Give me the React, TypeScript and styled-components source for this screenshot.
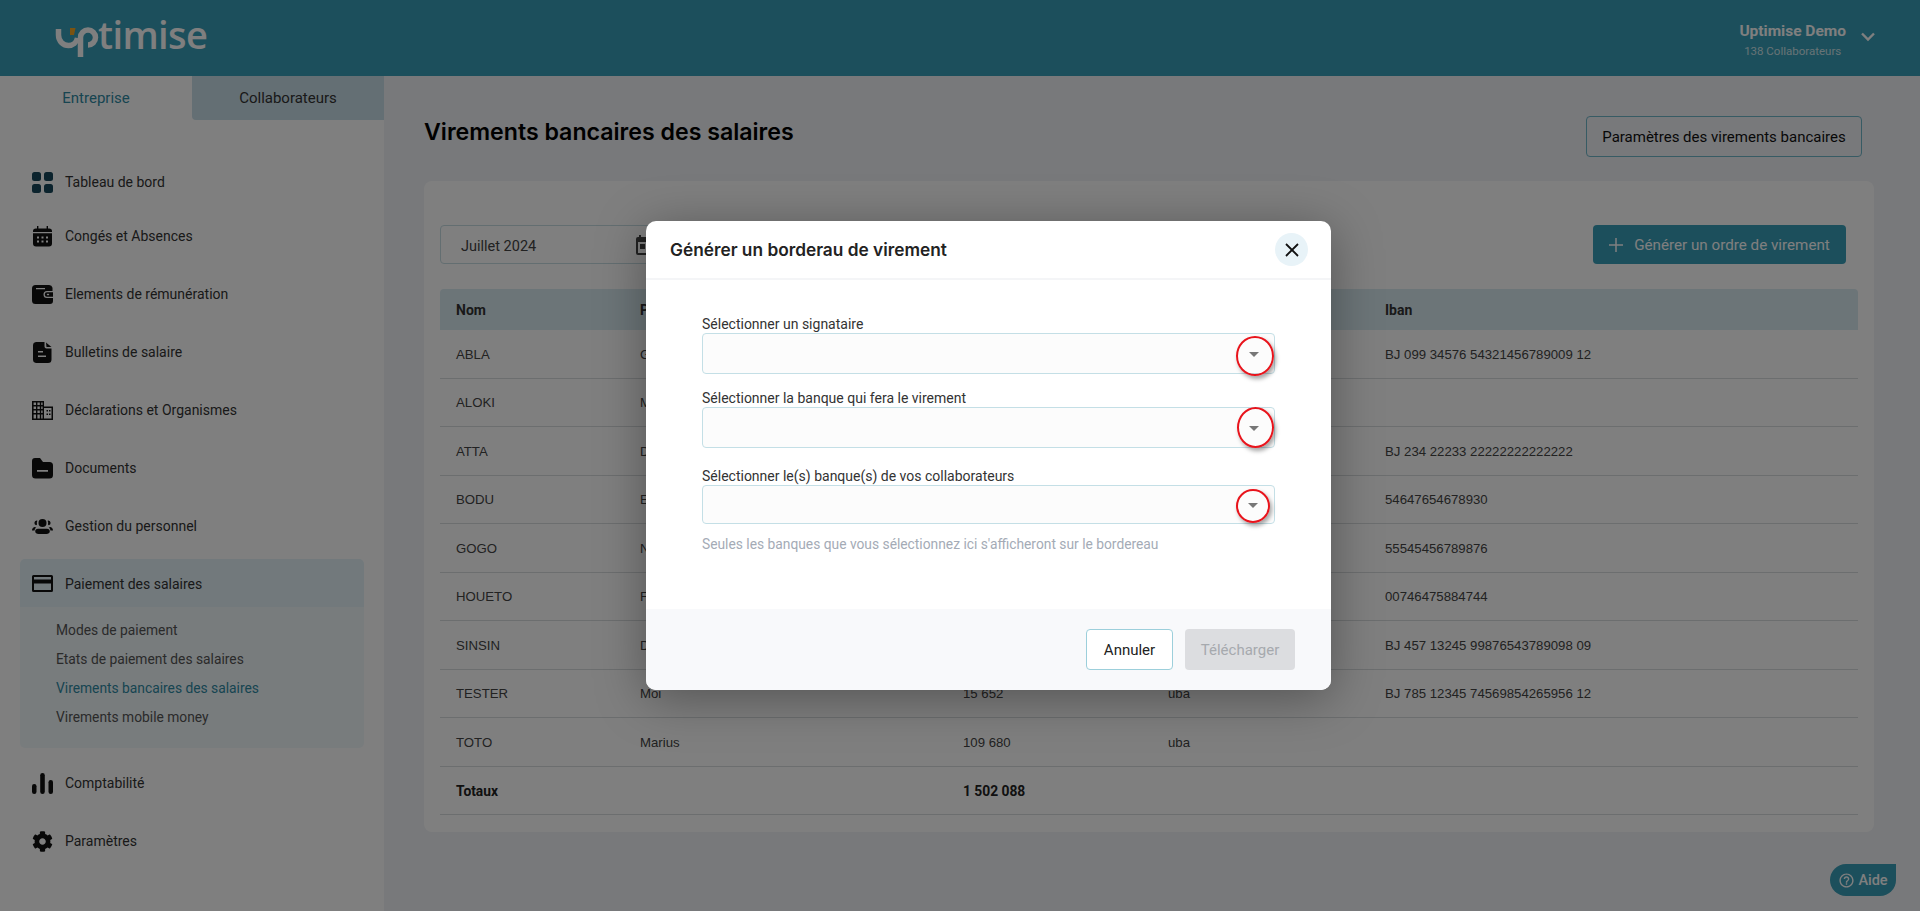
import React from 'react';
import styled, { createGlobalStyle } from 'styled-components';
import { MdOutlineHelpOutline } from 'react-icons/md';
import { FaCog } from 'react-icons/fa';

const Global = createGlobalStyle`
  html, body { margin: 0; padding: 0; height: 100%; overflow: hidden; }
  body { font-family: Roboto, "Liberation Sans", sans-serif; background: #f0f2f6; color: #333; }
  #root { height: 100%; }
`;

const Page = styled.div`
  height: 911px;
  display: flex;
  flex-direction: column;
  position: relative;
`;
const TopBar = styled.header`
  height: 76px;
  flex: none;
  background: #389eb8;
  display: flex;
  align-items: center;
  justify-content: space-between;
  padding: 0 45px 0 55px;
`;
const Logo = styled.div`
  display: flex;
  align-items: flex-start;
  height: 40px;
  margin-top: 4px;
`;
const LogoText = styled.span`
  font-family: "Open Sans", sans-serif;
  font-weight: 600;
  font-size: 38px;
  line-height: 40px;
  letter-spacing: -0.6px;
  color: #fff;
  margin: -6px 0 0 -1px;
`;
const Account = styled.div`
  display: flex;
  align-items: center;
  gap: 15px;
  color: #fff;
`;
const AccountText = styled.div`
  display: flex;
  flex-direction: column;
  align-items: center;
  margin-top: 4px;
`;
const AccountName = styled.div`
  font-size: 15.5px;
  font-weight: 700;
  line-height: 20px;
  color: #fff;
`;
const AccountSub = styled.div`
  font-size: 11.5px;
  line-height: 16px;
  margin-top: 2px;
  color: #cfe6ec;
`;
const Chevron = styled.svg`
  margin-bottom: 3px;
`;
const Body = styled.div`
  flex: 1;
  display: flex;
  min-height: 0;
`;
const Side = styled.aside`
  width: 384px;
  flex: none;
  background: #fff;
  display: flex;
  flex-direction: column;
`;
const Tabs = styled.div`
  display: flex;
  height: 44px;
  flex: none;
`;
const TabItem = styled.div<{ $active?: boolean }>`
  flex: 1;
  display: flex;
  align-items: center;
  justify-content: center;
  font-size: 15px;
  color: ${p => (p.$active ? '#2f8aa3' : '#333')};
  background: ${p => (p.$active ? '#fff' : '#c9dee8')};
  border-bottom-left-radius: ${p => (p.$active ? '0' : '4px')};
`;
const Nav = styled.nav`
  display: flex;
  flex-direction: column;
  padding: 37px 20px 0;
`;
const NavItem = styled.div<{ $h?: number; $open?: boolean }>`
  height: ${p => p.$h ?? 58}px;
  flex: none;
  box-sizing: border-box;
  display: flex;
  align-items: center;
  gap: 12px;
  padding-left: 12px;
  padding-top: ${p => (p.$open ? '1px' : '0')};
  margin-top: ${p => (p.$open ? '4px' : '0')};
  font-size: 14px;
  color: #333;
  background: ${p => (p.$open ? '#e4f3f9' : 'transparent')};
  border-radius: ${p => (p.$open ? '5px 5px 0 0' : '0')};
  svg { flex: none; width: 21px; height: 21px; color: #111; display: block; }
`;
const SubGroup = styled.div`
  background: #f1f8fb;
  padding: 8px 0 17px;
  margin-bottom: 6px;
  border-radius: 0 0 5px 5px;
  display: flex;
  flex-direction: column;
`;
const SubItem = styled.div<{ $active?: boolean }>`
  height: 29px;
  display: flex;
  align-items: center;
  padding-left: 36px;
  font-size: 13.8px;
  color: ${p => (p.$active ? '#2f8aa3' : '#555')};
`;
const Main = styled.main`
  flex: 1;
  padding: 40px 46px 0 40px;
  display: flex;
  flex-direction: column;
  min-width: 0;
`;
const TitleRow = styled.div`
  display: flex;
  align-items: flex-start;
  justify-content: space-between;
  height: 65px;
  flex: none;
`;
const Title = styled.h1`
  margin: 0;
  font-family: Inter, sans-serif;
  font-size: 23.15px;
  font-weight: 600;
  line-height: 32px;
  color: #000;
`;
const OutlineTop = styled.button`
  height: 41px;
  width: 276px;
  margin-right: 12px;
  background: transparent;
  border: 1px solid #6fb6c9;
  border-radius: 4px;
  font: 400 15px Roboto, sans-serif;
  color: #111;
`;
const Card = styled.section`
  background: #fff;
  border-radius: 8px;
  height: 651px;
  box-sizing: border-box;
  padding: 44px 16px 0;
  display: flex;
  flex-direction: column;
`;
const ToolRow = styled.div`
  display: flex;
  justify-content: space-between;
  height: 64px;
  flex: none;
`;
const DateField = styled.div`
  width: 240px;
  height: 39px;
  box-sizing: border-box;
  border: 1px solid #c6dde2;
  border-radius: 4px;
  display: flex;
  align-items: center;
  justify-content: space-between;
  padding: 0 22px 0 20px;
  font-size: 14.5px;
  color: #444;
  span { padding-top: 3px; }
`;
const PrimaryButton = styled.button`
  height: 39px;
  width: 253px;
  margin-right: 12px;
  border: none;
  border-radius: 4px;
  background: #389eb8;
  color: #fff;
  font: 400 15.2px Roboto, sans-serif;
  display: flex;
  align-items: center;
  justify-content: center;
  gap: 11px;
`;
const Grid = styled.div`
  display: flex;
  flex-direction: column;
`;
const HeadRow = styled.div`
  display: grid;
  grid-template-columns: 184px 323px 205px 217px 1fr;
  height: 41px;
  flex: none;
  align-items: center;
  background: #d9eaf1;
  border-radius: 4px 4px 0 0;
  padding-left: 16px;
  font-size: 14px;
  font-weight: 700;
  color: #333;
`;
const Row = styled.div<{ $bold?: boolean }>`
  display: grid;
  grid-template-columns: 184px 323px 205px 217px 1fr;
  height: 48.5px;
  flex: none;
  box-sizing: border-box;
  align-items: center;
  border-bottom: 1px solid #d8dcdf;
  padding: 1px 0 0 16px;
  font-family: ${p => (p.$bold ? 'Roboto, sans-serif' : '"Liberation Sans", sans-serif')};
  font-size: ${p => (p.$bold ? '13.8px' : '13.2px')};
  font-weight: ${p => (p.$bold ? 700 : 400)};
  color: ${p => (p.$bold ? '#222' : '#444')};
`;
const Help = styled.div`
  position: absolute;
  right: 24px;
  bottom: 15px;
  height: 32px;
  width: 66px;
  box-sizing: border-box;
  background: #389eb8;
  border-radius: 16px 0 16px 16px;
  color: #fff;
  font-size: 14.5px;
  font-weight: 500;
  display: flex;
  align-items: center;
  justify-content: center;
  gap: 3px;
`;
const Overlay = styled.div`
  position: absolute;
  inset: 0;
  background: rgba(0, 0, 0, 0.5);
  display: flex;
  justify-content: flex-start;
  align-items: flex-start;
  padding: 221px 0 0 646px;
  box-sizing: border-box;
`;
const Modal = styled.div`
  width: 685px;
  height: 469px;
  background: #fff;
  border-radius: 10px;
  box-shadow: 0 8px 50px rgba(0, 0, 0, 0.35);
  display: flex;
  flex-direction: column;
  overflow: hidden;
`;
const ModalHead = styled.div`
  height: 59px;
  flex: none;
  box-sizing: border-box;
  display: flex;
  align-items: center;
  justify-content: space-between;
  padding: 0 24px;
  border-bottom: 2px solid #f4f5f7;
`;
const ModalTitle = styled.h2`
  margin: 0;
  font-family: Inter, sans-serif;
  font-size: 17.3px;
  font-weight: 600;
  color: #222;
`;
const CloseBtn = styled.button`
  width: 33px;
  height: 33px;
  border: none;
  border-radius: 50%;
  background: #e8f3f8;
  display: flex;
  align-items: center;
  justify-content: center;
  padding: 0;
  margin-right: -1px;
`;
const ModalBody = styled.div`
  flex: 1;
  display: flex;
  flex-direction: column;
  padding: 35px 56px 0;
`;
const FieldBlock = styled.div<{ $gap: number }>`
  display: flex;
  flex-direction: column;
  margin-bottom: ${p => p.$gap}px;
`;
const FieldLabel = styled.label`
  font-size: 14px;
  line-height: 18px;
  color: #333;
`;
const SelectBox = styled.div<{ $h: number }>`
  position: relative;
  height: ${p => p.$h}px;
  box-sizing: border-box;
  background: #fcfcfc;
  border: 1px solid #c4dfe6;
  border-radius: 4px;
`;
const Caret = styled.span<{ $right: number; $top: number }>`
  position: absolute;
  right: ${p => p.$right}px;
  top: ${p => p.$top}px;
  width: 0;
  height: 0;
  border-left: 5px solid transparent;
  border-right: 5px solid transparent;
  border-top: 5px solid #777;
`;
const Ring = styled.span<{ $w: number; $h: number; $right: number; $top: number }>`
  position: absolute;
  width: ${p => p.$w}px;
  height: ${p => p.$h}px;
  right: ${p => p.$right}px;
  top: ${p => p.$top}px;
  box-sizing: border-box;
  border: 2px solid #e8141c;
  border-radius: 50%;
  box-shadow: 2px 3px 4px rgba(0, 0, 0, 0.35);
`;
const Hint = styled.div`
  font-size: 13.8px;
  line-height: 18px;
  color: #a4abb6;
  margin-top: 11px;
`;
const ModalFoot = styled.div`
  height: 81px;
  flex: none;
  box-sizing: border-box;
  background: #f8f9fb;
  display: flex;
  justify-content: flex-end;
  align-items: flex-start;
  gap: 12px;
  padding: 20px 36px 0 0;
`;
const CancelBtn = styled.button`
  width: 87px;
  height: 41px;
  background: #fff;
  border: 1px solid #9ccfdb;
  border-radius: 4px;
  color: #222;
  font: 400 15px Roboto, sans-serif;
`;
const DisabledBtn = styled.button`
  width: 110px;
  height: 41px;
  background: #dcdde0;
  border: none;
  border-radius: 4px;
  color: #a6a9ae;
  font: 400 15px Roboto, sans-serif;
`;

const IDash = () => (
  <svg viewBox="0 0 21 21" fill="#17465a"><rect x="0" y="0" width="9" height="9" rx="2.5" /><rect x="12" y="0" width="9" height="9" rx="2.5" /><rect x="0" y="12" width="9" height="9" rx="2.5" /><rect x="12" y="12" width="9" height="9" rx="2.5" /></svg>
);
const ICal = () => (
  <svg viewBox="0 0 21 21" fill="currentColor"><path d="M5 0h1.4v2.4h8.2V0H16v2.4h1.2A2.8 2.8 0 0 1 20 5.2V6H1v-.8a2.8 2.8 0 0 1 2.8-2.8H5z" /><path fillRule="evenodd" d="M1 7.2h19v10.4a3 3 0 0 1-3 3H4a3 3 0 0 1-3-3zM5 10.5h2v2H5zm4.5 0h2v2h-2zm4.5 0h2v2h-2zM5 14.5h2v2H5zm4.5 0h2v2h-2zm4.5 0h2v2h-2z" /></svg>
);
const IWallet = () => (
  <svg viewBox="0 0 21 21" fill="currentColor"><path fillRule="evenodd" d="M3.5 1H17a3.500 3.500 0 0 1 3.500 2.700V7H15a3.500 3.500 0 0 0 0 7h6v3a3 3 0 0 1-3 3H3.500A3.500 3.500 0 0 1 0 16.500v-12A3.500 3.500 0 0 1 3.500 1zM4 4v1.200h9V4z" /><path fillRule="evenodd" d="M15 8.300h6v4.400h-6a2.200 2.200 0 0 1 0-4.400zm.5 1.500a.7.7 0 0 0 0 1.400h1a.7.7 0 0 0 0-1.400z" /></svg>
);
const IFile = () => (
  <svg viewBox="0 0 21 21" fill="currentColor"><path fillRule="evenodd" d="M4 0h8.500v4.500a2 2 0 0 0 2 2H19.500V17.500a3.500 3.500 0 0 1-3.500 3.500H4a3.500 3.500 0 0 1-3-3.500v-14A3.500 3.500 0 0 1 4 0zM6 9v1.500h5V9zm0 4.500V15h8v-1.500z" /><path d="M14 .5l5.500 4.500h-5z" /></svg>
);
const IBuilding = () => (
  <svg viewBox="0 0 21 19" fill="currentColor"><path fillRule="evenodd" d="M0 0h12v5.500h9V19H0zM1.600 1.500v2.500h2.400V1.500zm3.800 0v2.500h2.400V1.500zm3.800 0v2.500h1.400V1.500zM1.600 5.500v2.500h2.400V5.500zm3.800 0v2.500h2.400V5.500zm3.800 0v2.500h1.400V5.500zM1.600 9.500v2.500h2.400V9.500zm3.800 0v2.500h2.400V9.500zm3.800 0v2.500h1.400V9.500zM1.600 13.500v4h2.400v-4zm3.800 0v4h2.400v-4zm3.800 0v4h1.400v-4zM12 7v10.500h7.500V7zm2.500 2h1.500v1.500h-1.500zm2.500 0h1.500v1.500H17zm-2.500 3.500h1.500V14h-1.500zm2.500 0h1.500V14H17z" /></svg>
);
const IFolder = () => (
  <svg viewBox="0 0 21 21" fill="currentColor"><path fillRule="evenodd" d="M3 0h5l3 4h6.500A3.500 3.500 0 0 1 21 7.500V17a3.500 3.500 0 0 1-3.500 3.500h-14A3.500 3.500 0 0 1 0 17V3a3 3 0 0 1 3-3zm2 12v1.800h11V12z" /></svg>
);
const IPeople = () => (
  <svg viewBox="0 0 21 21" fill="currentColor"><path fillRule="evenodd" d="M10.500 3a4 4 0 1 1 0 8 4 4 0 0 1 0-8z" /><path d="M4.500 4.500a2.500 2.500 0 0 0-.5 4.800c.4-.1.8-.4 1-.7a5.200 5.200 0 0 1 .4-3.800 2.500 2.500 0 0 0-.9-.3zM16.500 4.500a2.500 2.500 0 0 1 .5 4.800c-.4-.1-.8-.4-1-.7a5.200 5.200 0 0 0-.4-3.800 2.500 2.500 0 0 1 .9-.3zM6 12.800h9c1.800 0 2.800 1.200 2.800 2.500 0 1.700-1.500 2.700-3.300 2.700h-8c-1.800 0-3.300-1-3.300-2.700 0-1.300 1-2.500 2.800-2.500zM2.500 11l1.800.6c-1 .7-1.600 1.600-1.700 2.800H0c0-1.500 1-2.900 2.500-3.400zM18.500 11l-1.800.6c1 .7 1.600 1.600 1.700 2.800H21c0-1.500-1-2.900-2.500-3.400z" /></svg>
);
const ICard = () => (
  <svg viewBox="0 0 21 17" fill="currentColor"><path fillRule="evenodd" d="M1.500 0h18A1.500 1.500 0 0 1 21 1.500v14a1.500 1.500 0 0 1-1.500 1.500h-18A1.500 1.500 0 0 1 0 15.500v-14A1.500 1.500 0 0 1 1.500 0zM2 2v2.500h17V2zm0 6.500V15h17V8.500z" /></svg>
);
const IBars = () => (
  <svg viewBox="0 0 21 21" fill="currentColor"><rect x="0" y="11" width="4.500" height="10" rx="2.200" /><rect x="8.200" y="0" width="4.600" height="21" rx="2.300" /><rect x="16.500" y="7" width="4.500" height="14" rx="2.200" /></svg>
);

const rows = [
  ['ABLA', 'Gérard', '124 568', 'uba', 'BJ 099 34576 54321456789009 12'],
  ['ALOKI', 'Marc', '98 540', 'uba', ''],
  ['ATTA', 'David', '187 320', 'uba', 'BJ 234 22233 22222222222222'],
  ['BODU', 'Eric', '205 410', 'boa', '54647654678930'],
  ['GOGO', 'Nadia', '176 236', 'boa', '55545456789876'],
  ['HOUETO', 'Fabrice', '312 450', 'ecobank', '00746475884744'],
  ['SINSIN', 'Denis', '272 232', 'uba', 'BJ 457 13245 99876543789098 09'],
  ['TESTER', 'Moi', '15 652', 'uba', 'BJ 785 12345 74569854265956 12'],
  ['TOTO', 'Marius', '109 680', 'uba', ''],
];

const fields = [
  { label: 'Sélectionner un signataire', h: 41, gap: 15, caret: [15, 18], ring: [38, 40, 0, 2] },
  { label: 'Sélectionner la banque qui fera le virement', h: 41, gap: 19, caret: [15, 18], ring: [37, 41, 0, -1] },
  { label: 'Sélectionner le(s) banque(s) de vos collaborateurs', h: 39, gap: 0, caret: [16, 17], ring: [34, 34, 4, 3] },
];

export default function App() {
  return (
    <Page>
      <Global />
      <TopBar>
        <Logo>
          <svg width="44" height="40" viewBox="0 0 44 40" fill="none">
            <path d="M3.500 9v6c0 6.500 5 10.500 10 10.500 4.500 0 8-3 9-7.500" stroke="#fff" strokeWidth="5.500" />
            <path d="M25.500 37V17.500a7.500 7.500 0 1 1 7.500 7.500" stroke="#fff" strokeWidth="5.500" />
            <path d="M15 8h5.500l-1.500 7h-4z" fill="#f5a623" />
          </svg>
          <LogoText>timise</LogoText>
        </Logo>
        <Account>
          <AccountText>
            <AccountName>Uptimise Demo</AccountName>
            <AccountSub>138 Collaborateurs</AccountSub>
          </AccountText>
          <Chevron width="14" height="10" viewBox="0 0 14 10" fill="none" stroke="#fff" strokeWidth="2.400"><path d="M1 1.500l6 6 6-6" /></Chevron>
        </Account>
      </TopBar>
      <Body>
        <Side>
          <Tabs>
            <TabItem $active>Entreprise</TabItem>
            <TabItem>Collaborateurs</TabItem>
          </Tabs>
          <Nav>
            <NavItem $h={50}><IDash />Tableau de bord</NavItem>
            <NavItem><ICal />Congés et Absences</NavItem>
            <NavItem><IWallet />Elements de rémunération</NavItem>
            <NavItem><IFile />Bulletins de salaire</NavItem>
            <NavItem><IBuilding />Déclarations et Organismes</NavItem>
            <NavItem><IFolder />Documents</NavItem>
            <NavItem><IPeople />Gestion du personnel</NavItem>
            <NavItem $h={48} $open><ICard />Paiement des salaires</NavItem>
            <SubGroup>
              <SubItem>Modes de paiement</SubItem>
              <SubItem>Etats de paiement des salaires</SubItem>
              <SubItem $active>Virements bancaires des salaires</SubItem>
              <SubItem>Virements mobile money</SubItem>
            </SubGroup>
            <NavItem><IBars />Comptabilité</NavItem>
            <NavItem><FaCog />Paramètres</NavItem>
          </Nav>
        </Side>
        <Main>
          <TitleRow>
            <Title>Virements bancaires des salaires</Title>
            <OutlineTop>Paramètres des virements bancaires</OutlineTop>
          </TitleRow>
          <Card>
            <ToolRow>
              <DateField>
                <span>Juillet 2024</span>
                <svg width="24" height="24" viewBox="0 0 24 24" fill="#444"><path d="M19 4h-1V2h-2v2H8V2H6v2H5a2 2 0 0 0-2 2v14a2 2 0 0 0 2 2h14a2 2 0 0 0 2-2V6a2 2 0 0 0-2-2zm0 16H5V9h14zM7 11h5v5H7z" /></svg>
              </DateField>
              <PrimaryButton>
                <svg width="14" height="14" viewBox="0 0 14 14" stroke="#fff" strokeWidth="1.500"><path d="M7 0v14M0 7h14" /></svg>
                Générer un ordre de virement
              </PrimaryButton>
            </ToolRow>
            <Grid>
              <HeadRow><span>Nom</span><span>Prénom</span><span>Net à payer</span><span>Banque</span><span>Iban</span></HeadRow>
              {rows.map(r => (
                <Row key={r[0]}>{r.map((c, i) => <span key={i}>{c}</span>)}</Row>
              ))}
              <Row $bold><span>Totaux</span><span /><span>1 502 088</span><span /><span /></Row>
            </Grid>
          </Card>
        </Main>
      </Body>
      <Help><MdOutlineHelpOutline size={17} />Aide</Help>
      <Overlay>
        <Modal>
          <ModalHead>
            <ModalTitle>Générer un borderau de virement</ModalTitle>
            <CloseBtn>
              <svg width="14" height="14" viewBox="0 0 14 14" stroke="#111" strokeWidth="1.800"><path d="M1 1l12 12M13 1L1 13" /></svg>
            </CloseBtn>
          </ModalHead>
          <ModalBody>
            {fields.map(f => (
              <FieldBlock key={f.label} $gap={f.gap}>
                <FieldLabel>{f.label}</FieldLabel>
                <SelectBox $h={f.h}>
                  <Caret $right={f.caret[0]} $top={f.caret[1]} />
                  <Ring $w={f.ring[0]} $h={f.ring[1]} $right={f.ring[2]} $top={f.ring[3]} />
                </SelectBox>
              </FieldBlock>
            ))}
            <Hint>Seules les banques que vous sélectionnez ici s'afficheront sur le bordereau</Hint>
          </ModalBody>
          <ModalFoot>
            <CancelBtn>Annuler</CancelBtn>
            <DisabledBtn>Télécharger</DisabledBtn>
          </ModalFoot>
        </Modal>
      </Overlay>
    </Page>
  );
}
